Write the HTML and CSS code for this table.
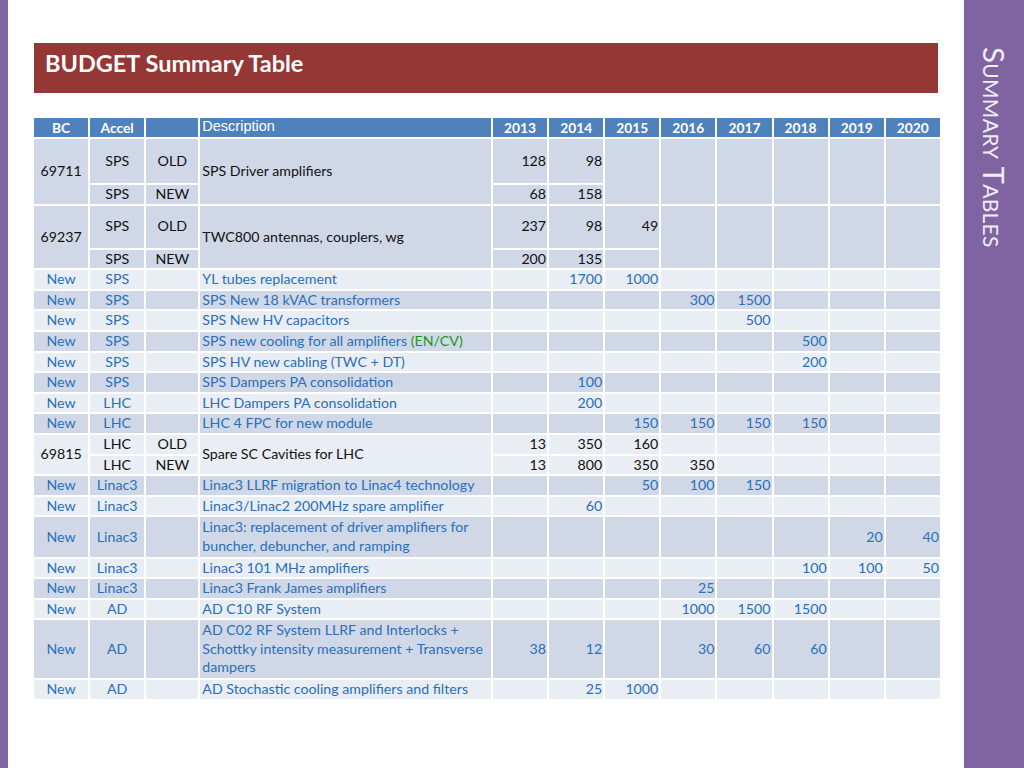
FILE: index.html
```html
<!DOCTYPE html>
<html lang="en">
<head>
<meta charset="utf-8">
<title>BUDGET Summary Table</title>
<link rel="stylesheet" href="styles.css">
</head>
<body>
<div class="slide">
  <div class="strip"></div>
  <main class="main">
    <div class="titlebar"><h1>BUDGET Summary Table</h1></div>
    <table class="budget">
      <colgroup>
        <col class="c-bc"><col class="c-acc"><col class="c-st"><col class="c-desc">
        <col class="c-yr"><col class="c-yr"><col class="c-yr"><col class="c-yr">
        <col class="c-yr"><col class="c-yr"><col class="c-yr"><col class="c-yr">
      </colgroup>
      <thead>
        <tr>
          <th>BC</th><th>Accel</th><th></th><th class="h-desc">Description</th>
          <th>2013</th><th>2014</th><th>2015</th><th>2016</th><th>2017</th><th>2018</th><th>2019</th><th>2020</th>
        </tr>
      </thead>
      <tbody>
        <tr class="dark black tall">
          <td rowspan="2" class="ctr">69711</td><td class="ctr">SPS</td><td class="ctr">OLD</td>
          <td rowspan="2" class="desc">SPS Driver amplifiers</td>
          <td class="num">128</td><td class="num">98</td>
          <td rowspan="2"></td><td rowspan="2"></td><td rowspan="2"></td><td rowspan="2"></td><td rowspan="2"></td><td rowspan="2"></td>
        </tr>
        <tr class="dark black sub">
          <td class="ctr">SPS</td><td class="ctr">NEW</td>
          <td class="num">68</td><td class="num">158</td>
        </tr>
        <tr class="dark black tall2">
          <td rowspan="2" class="ctr">69237</td><td class="ctr">SPS</td><td class="ctr">OLD</td>
          <td rowspan="2" class="desc">TWC800 antennas, couplers, wg</td>
          <td class="num">237</td><td class="num">98</td><td class="num">49</td>
          <td rowspan="2"></td><td rowspan="2"></td><td rowspan="2"></td><td rowspan="2"></td><td rowspan="2"></td>
        </tr>
        <tr class="dark black sub">
          <td class="ctr">SPS</td><td class="ctr">NEW</td>
          <td class="num">200</td><td class="num">135</td><td></td>
        </tr>
        <tr class="light">
          <td class="ctr">New</td><td class="ctr">SPS</td><td></td><td class="desc">YL tubes replacement</td>
          <td></td><td class="num">1700</td><td class="num">1000</td><td></td><td></td><td></td><td></td><td></td>
        </tr>
        <tr class="dark">
          <td class="ctr">New</td><td class="ctr">SPS</td><td></td><td class="desc">SPS New 18 kVAC transformers</td>
          <td></td><td></td><td></td><td class="num">300</td><td class="num">1500</td><td></td><td></td><td></td>
        </tr>
        <tr class="light">
          <td class="ctr">New</td><td class="ctr">SPS</td><td></td><td class="desc">SPS New HV capacitors</td>
          <td></td><td></td><td></td><td></td><td class="num">500</td><td></td><td></td><td></td>
        </tr>
        <tr class="dark">
          <td class="ctr">New</td><td class="ctr">SPS</td><td></td><td class="desc">SPS new cooling for all amplifiers <span class="green">(EN/CV)</span></td>
          <td></td><td></td><td></td><td></td><td></td><td class="num">500</td><td></td><td></td>
        </tr>
        <tr class="light">
          <td class="ctr">New</td><td class="ctr">SPS</td><td></td><td class="desc">SPS HV new cabling (TWC + DT)</td>
          <td></td><td></td><td></td><td></td><td></td><td class="num">200</td><td></td><td></td>
        </tr>
        <tr class="dark">
          <td class="ctr">New</td><td class="ctr">SPS</td><td></td><td class="desc">SPS Dampers PA consolidation</td>
          <td></td><td class="num">100</td><td></td><td></td><td></td><td></td><td></td><td></td>
        </tr>
        <tr class="light">
          <td class="ctr">New</td><td class="ctr">LHC</td><td></td><td class="desc">LHC Dampers PA consolidation</td>
          <td></td><td class="num">200</td><td></td><td></td><td></td><td></td><td></td><td></td>
        </tr>
        <tr class="dark">
          <td class="ctr">New</td><td class="ctr">LHC</td><td></td><td class="desc">LHC 4 FPC for new module</td>
          <td></td><td></td><td class="num">150</td><td class="num">150</td><td class="num">150</td><td class="num">150</td><td></td><td></td>
        </tr>
        <tr class="light black">
          <td rowspan="2" class="ctr">69815</td><td class="ctr">LHC</td><td class="ctr">OLD</td>
          <td rowspan="2" class="desc">Spare SC Cavities for LHC</td>
          <td class="num">13</td><td class="num">350</td><td class="num">160</td><td></td><td></td><td></td><td></td><td></td>
        </tr>
        <tr class="light black sub">
          <td class="ctr">LHC</td><td class="ctr">NEW</td>
          <td class="num">13</td><td class="num">800</td><td class="num">350</td><td class="num">350</td><td></td><td></td><td></td><td></td>
        </tr>
        <tr class="dark">
          <td class="ctr">New</td><td class="ctr">Linac3</td><td></td><td class="desc">Linac3 LLRF migration to Linac4 technology</td>
          <td></td><td></td><td class="num">50</td><td class="num">100</td><td class="num">150</td><td></td><td></td><td></td>
        </tr>
        <tr class="light">
          <td class="ctr">New</td><td class="ctr">Linac3</td><td></td><td class="desc">Linac3/Linac2 200MHz spare amplifier</td>
          <td></td><td class="num">60</td><td></td><td></td><td></td><td></td><td></td><td></td>
        </tr>
        <tr class="dark">
          <td class="ctr">New</td><td class="ctr">Linac3</td><td></td><td class="desc multi">Linac3: replacement of driver amplifiers for<br>buncher, debuncher, and ramping</td>
          <td></td><td></td><td></td><td></td><td></td><td></td><td class="num">20</td><td class="num">40</td>
        </tr>
        <tr class="light">
          <td class="ctr">New</td><td class="ctr">Linac3</td><td></td><td class="desc">Linac3 101 MHz amplifiers</td>
          <td></td><td></td><td></td><td></td><td></td><td class="num">100</td><td class="num">100</td><td class="num">50</td>
        </tr>
        <tr class="dark">
          <td class="ctr">New</td><td class="ctr">Linac3</td><td></td><td class="desc">Linac3 Frank James amplifiers</td>
          <td></td><td></td><td></td><td class="num">25</td><td></td><td></td><td></td><td></td>
        </tr>
        <tr class="light">
          <td class="ctr">New</td><td class="ctr">AD</td><td></td><td class="desc">AD C10 RF System</td>
          <td></td><td></td><td></td><td class="num">1000</td><td class="num">1500</td><td class="num">1500</td><td></td><td></td>
        </tr>
        <tr class="dark">
          <td class="ctr">New</td><td class="ctr">AD</td><td></td><td class="desc multi">AD C02 RF System LLRF and Interlocks +<br>Schottky intensity measurement + Transverse<br>dampers</td>
          <td class="num">38</td><td class="num">12</td><td></td><td class="num">30</td><td class="num">60</td><td class="num">60</td><td></td><td></td>
        </tr>
        <tr class="light">
          <td class="ctr">New</td><td class="ctr">AD</td><td></td><td class="desc">AD Stochastic cooling amplifiers and filters</td>
          <td></td><td class="num">25</td><td class="num">1000</td><td></td><td></td><td></td><td></td><td></td>
        </tr>
      </tbody>
    </table>
  </main>
  <aside class="sidebar"><span class="side-title">Summary Tables</span></aside>
</div>
</body>
</html>
```
FILE: styles.css
```css
html, body {
  margin: 0;
  padding: 0;
  background: #ffffff;
}

.slide {
  display: flex;
  width: 1024px;
  height: 768px;
  overflow: hidden;
  font-family: Lato, "Open Sans", sans-serif;
}

.strip {
  width: 8px;
  background: #8064a2;
  flex: none;
}

.main {
  flex: 1;
  padding: 43px 0 0 26px;
}

.titlebar {
  width: 904px;
  height: 50px;
  background: #953735;
  display: flex;
  align-items: center;
  box-sizing: border-box;
  padding: 0 0 10px 11px;
}

.titlebar h1 {
  margin: 0;
  color: #ffffff;
  font-size: 23.5px;
  font-weight: 700;
  letter-spacing: 0;
}

.budget {
  margin-top: 23px;
  margin-left: -2px;
  border-collapse: collapse;
  table-layout: fixed;
  width: 910px;
  font-size: 14.2px;
  color: #2a6fb7;
}

.c-bc { width: 56px; }
.c-acc { width: 56px; }
.c-st { width: 54px; }
.c-desc { width: 292px; }
.c-yr { width: 56px; }

.budget th,
.budget td {
  border: 2px solid #ffffff;
  padding: 0;
  line-height: 18.6px;
  vertical-align: middle;
  white-space: nowrap;
  overflow: hidden;
}

.budget th {
  background: #4f81bd;
  color: #ffffff;
  font-weight: 700;
  font-size: 13.8px;
  text-align: center;
  height: 19px;
  line-height: 19px;
}

.budget th.h-desc {
  text-align: left;
  font-family: "Liberation Sans", Arial, sans-serif;
  font-weight: 400;
  font-size: 14.5px;
  padding-left: 2px;
  vertical-align: top;
  line-height: 16px;
}

.dark td { background: #d0d8e8; }
.light td { background: #e9edf4; }
.black td { color: #111111; }

.tall td { height: 44px; }
.tall2 td { height: 42px; }

.sub td {
  border-top: 1px solid #dde3ee;
}

.ctr { text-align: center; }

.num {
  text-align: right;
  padding-right: 1px !important;
}

.desc {
  text-align: left;
  padding-left: 2px !important;
}

.multi {
  padding-top: 1px !important;
  padding-bottom: 1px !important;
}

.green { color: #1c961c; }

.sidebar {
  width: 60px;
  flex: none;
  margin-left: auto;
  background: #8064a2;
  display: flex;
  justify-content: center;
  padding-top: 47px;
  box-sizing: border-box;
}

.side-title {
  writing-mode: vertical-rl;
  font-variant: small-caps;
  color: #f1edf6;
  font-size: 29.5px;
  font-weight: 400;
  letter-spacing: 0.3px;
  line-height: 1;
}
```
